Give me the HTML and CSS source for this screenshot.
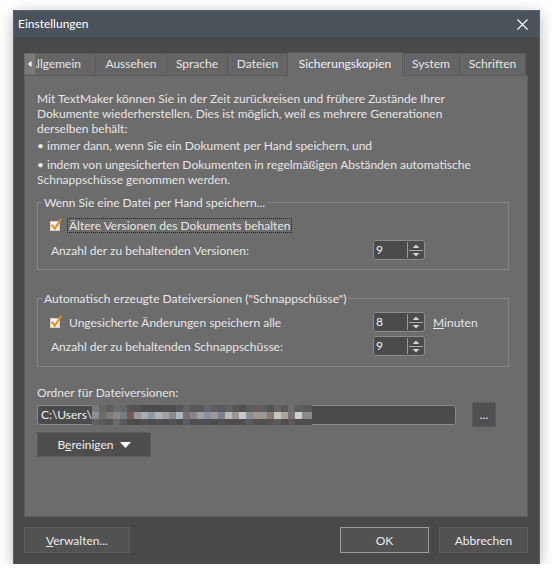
FILE: index.html
```html
<!DOCTYPE html>
<html lang="de">
<head>
<meta charset="utf-8">
<title>Einstellungen</title>
<link rel="stylesheet" href="styles.css">
</head>
<body>
<div class="window">
  <div class="titlebar">
    <span class="title">Einstellungen</span>
    <svg class="close" width="11" height="11" viewBox="0 0 11 11"><path d="M0.5 0.5 L10.5 10.5 M10.5 0.5 L0.5 10.5" stroke="#ffffff" stroke-width="1.1" fill="none"/></svg>
  </div>
  <div class="client">
    <div class="tabs">
      <div class="tabstrip">
        <div class="tab w-allg">Allgemein</div>
        <div class="tab w-auss">Aussehen</div>
        <div class="tab w-spra">Sprache</div>
        <div class="tab w-date">Dateien</div>
        <div class="tab active w-sich">Sicherungskopien</div>
        <div class="tab w-syst">System</div>
        <div class="tab w-schr">Schriften</div>
        <div class="scroll-left"><svg width="4" height="6" viewBox="0 0 4 6"><path d="M3.5 0 L0 3 L3.5 6 Z" fill="#ffffff"/></svg></div>
      </div>
      <div class="panel">
        <div class="intro">
          <p>Mit TextMaker können Sie in der Zeit zurückreisen und frühere Zustände Ihrer<br>Dokumente wiederherstellen. Dies ist möglich, weil es mehrere Generationen<br>derselben behält:</p>
          <p class="b1">• immer dann, wenn Sie ein Dokument per Hand speichern, und</p>
          <p class="b2">• indem von ungesicherten Dokumenten in regelmäßigen Abständen automatische<br>Schnappschüsse genommen werden.</p>
        </div>

        <fieldset class="group g1">
          <legend>Wenn Sie eine Datei per Hand speichern...</legend>
          <div class="check-row">
            <svg class="checkbox" width="14" height="14" viewBox="0 0 14 14"><rect x="0.5" y="3.5" width="9" height="9" fill="#f6f6f6" stroke="#cfcfcf"/><path d="M2.3 7.6 L4.8 10.6 L10.8 1.6" stroke="#f28a00" stroke-width="2" fill="none" stroke-linecap="square"/></svg>
            <span class="check-label focus">Ältere Versionen des Dokuments behalten</span>
          </div>
          <div class="field-row r-g1">
            <span class="label">Anzahl der zu behaltenden Versionen:</span>
            <div class="spin">
              <span class="spin-value">9</span>
              <span class="spin-btns"><svg width="16" height="18" viewBox="0 0 16 18"><path d="M1 9.5 H15" stroke="#a8a8a8" stroke-width="1"/><path d="M4.5 7 L8 3.5 L11.5 7 Z" fill="#d0d0d0"/><path d="M4.5 12 L8 15.5 L11.5 12 Z" fill="#d0d0d0"/></svg></span>
            </div>
          </div>
        </fieldset>

        <fieldset class="group g2">
          <legend>Automatisch erzeugte Dateiversionen ("Schnappschüsse")</legend>
          <div class="field-row">
            <div class="check-inline">
              <svg class="checkbox" width="14" height="14" viewBox="0 0 14 14"><rect x="0.5" y="3.5" width="9" height="9" fill="#f6f6f6" stroke="#cfcfcf"/><path d="M2.3 7.6 L4.8 10.6 L10.8 1.6" stroke="#f28a00" stroke-width="2" fill="none" stroke-linecap="square"/></svg>
              <span class="check-label">Ungesicherte Änderungen speichern alle</span>
            </div>
            <div class="spin">
              <span class="spin-value">8</span>
              <span class="spin-btns"><svg width="16" height="18" viewBox="0 0 16 18"><path d="M1 9.5 H15" stroke="#a8a8a8" stroke-width="1"/><path d="M4.5 7 L8 3.5 L11.5 7 Z" fill="#d0d0d0"/><path d="M4.5 12 L8 15.5 L11.5 12 Z" fill="#d0d0d0"/></svg></span>
            </div>
            <span class="unit"><u>M</u>inuten</span>
          </div>
          <div class="field-row r-g2">
            <span class="label">Anzahl der zu behaltenden Schnappschüsse:</span>
            <div class="spin">
              <span class="spin-value">9</span>
              <span class="spin-btns"><svg width="16" height="18" viewBox="0 0 16 18"><path d="M1 9.5 H15" stroke="#a8a8a8" stroke-width="1"/><path d="M4.5 7 L8 3.5 L11.5 7 Z" fill="#d0d0d0"/><path d="M4.5 12 L8 15.5 L11.5 12 Z" fill="#d0d0d0"/></svg></span>
            </div>
          </div>
        </fieldset>

        <div class="folder-label">Ordner für Dateiversionen:</div>
        <div class="path-row">
          <div class="path-input"><span class="path-text">C:\Users\</span><span class="mosaic"></span></div>
          <button class="btn browse">...</button>
        </div>
        <button class="btn clean"><span>B<u>e</u>reinigen</span><svg width="11" height="6" viewBox="0 0 11 6"><path d="M0 0 H11 L5.5 6 Z" fill="#ffffff"/></svg></button>
      </div>
    </div>
    <div class="footer">
      <button class="btn fbtn manage"><u>V</u>erwalten...</button>
      <div class="spacer"></div>
      <button class="btn fbtn ok">OK</button>
      <button class="btn fbtn cancel">Abbrechen</button>
    </div>
  </div>
</div>
</body>
</html>
```

FILE: styles.css
```css
* { box-sizing: border-box; }
html, body { margin: 0; padding: 0; background: #ffffff; }
body {
  font-family: Lato, "Noto Sans", sans-serif;
  font-size: 12px;
  color: #e6e6e6;
}
p { margin: 0; }

.window {
  margin: 11px 0 0 14px;
  width: 525px;
  height: 553px;
  background: #494949;
  box-shadow: 0 0 0 1px #5b6168, 0 3px 14px rgba(0, 0, 0, 0.32);
  display: flex;
  flex-direction: column;
}

.titlebar {
  height: 26px;
  flex: none;
  background: #4a525a;
  color: #ffffff;
  display: flex;
  align-items: center;
  justify-content: space-between;
  padding: 0 11px 0 4px;
  font-size: 12px;
}
.title { line-height: 26px; }

.client {
  flex: 1;
  display: flex;
  flex-direction: column;
  padding: 14px 11px 11px 10px;
}

.tabs { display: flex; flex-direction: column; }

.tabstrip {
  position: relative;
  height: 24px;
  display: flex;
  align-items: flex-end;
}
.tab {
  height: 22px;
  line-height: 20px;
  text-align: center;
  background: #656565;
  border: 1px solid #5a5a5a;
  border-bottom: none;
  border-left: none;
  color: #e6e6e6;
  white-space: nowrap;
}
.tab.active {
  height: 24px;
  line-height: 21px;
  background: #6c6c6c;
  border-left: 1px solid #5a5a5a;
  margin-left: -1px;
  margin-bottom: -1px;
  position: relative;
  z-index: 1;
  color: #f0f0f0;
}
.w-allg { width: 72px; border-left: 1px solid #5a5a5a; text-align: left; padding-left: 4px; }
.w-auss { width: 71px; }
.w-spra { width: 61px; }
.w-date { width: 60px; }
.w-sich { width: 116px; }
.w-syst { width: 57px; }
.w-schr { width: 66px; }

.scroll-left {
  position: absolute;
  left: 0;
  bottom: 0;
  width: 12px;
  height: 22px;
  background: #7a7a7a;
  border: 1px solid #6a6a6a;
  display: flex;
  align-items: center;
  justify-content: center;
  z-index: 2;
}

.panel {
  height: 442px;
  background: #6c6c6c;
  border: 1px solid #5c5c5c;
  padding: 15px 17px 0 12px;
  display: flex;
  flex-direction: column;
  align-items: flex-start;
}

.intro { line-height: 15px; color: #e6e6e6; }
.intro .b1 { margin-top: 2px; }
.intro .b2 { margin-top: 4px; }

.group {
  width: 472px;
  margin: 0;
  border: 1px solid #868686;
  padding: 0 0 0 13px;
  min-width: 0;
}
.group legend {
  padding: 0 2px;
  margin-left: -9px;
  line-height: 15px;
  color: #e8e8e8;
}
.g1 { margin-top: 8px; padding-top: 7px; padding-bottom: 9px; }
.g2 { margin-top: 21px; padding-top: 6px; padding-bottom: 10px; }

.check-row {
  display: flex;
  align-items: center;
  height: 16px;
}
.checkbox { flex: none; margin-right: 3px; margin-left: -1px; }
.check-label {
  border: 1px dotted transparent;
  padding: 0 1px;
  line-height: 13px;
  white-space: nowrap;
}
.check-label.focus { border-color: #1e1e1e; }
.check-inline { display: flex; align-items: center; }

.field-row {
  display: grid;
  grid-template-columns: 314px 52px auto;
  column-gap: 8px;
  align-items: center;
  height: 20px;
}
.r-g1 { margin-top: 7px; }
.r-g2 { margin-top: 4px; }
.label { white-space: nowrap; }
.unit { white-space: nowrap; }

.spin {
  width: 52px;
  height: 20px;
  background: #4b4b4b;
  border: 1px solid #8c8c8c;
  border-radius: 3px;
  display: flex;
  align-items: stretch;
}
.spin-value {
  width: 34px;
  padding-left: 2px;
  line-height: 18px;
  color: #f2f2f2;
}
.spin-btns {
  flex: 1;
  border-left: 1px solid #9a9a9a;
  margin: 1px 0;
  display: flex;
  align-items: center;
  justify-content: center;
}
.spin-btns svg { margin-top: -1px; }

.folder-label {
  margin-top: 18px;
  line-height: 15px;
  color: #e4e4e4;
}

.path-row {
  margin-top: 2px;
  display: flex;
  align-items: center;
  gap: 16px;
  height: 25px;
}
.path-input {
  width: 419px;
  height: 20px;
  background: #4b4b4b;
  border: 1px solid #8a8a8a;
  border-radius: 3px;
  display: flex;
  align-items: center;
  padding-left: 3px;
}
.path-text { line-height: 18px; color: #f0f0f0; }
.mosaic {
  width: 220px;
  height: 20px;
  margin: -1px 0;
  background:
    linear-gradient(90deg, #737a80 0 7px, #6a6664 7px 14px, #5f5b58 14px 21px, #6c6a6a 21px 28px, #616a6e 28px 35px, #585354 35px 42px, #525252 42px 49px, #4c4c4c 49px 56px, #4a4a4a 56px 63px, #4b4b4b 63px 70px, #4d4d4d 70px 77px, #4c4c4c 77px 84px, #565656 84px 91px, #5c6468 91px 98px, #5e5656 98px 105px, #585858 105px 112px, #5b6874 112px 119px, #615a5a 119px 126px, #5a5a5a 126px 133px, #5e6064 133px 140px, #5a5656 140px 147px, #4f4f4f 147px 154px, #5a5a5a 154px 161px, #6a5a54 161px 168px, #5e5e5e 168px 175px, #545454 175px 182px, #646464 182px 189px, #5a5858 189px 196px, #6e6e6e 196px 203px, #58605c 203px 210px, #5a5a5a 210px 220px) 0 0 / 100% 7px no-repeat,
    linear-gradient(90deg, #8a8f95 0 7px, #6f6a66 7px 14px, #7a7a7a 14px 21px, #8c8686 21px 28px, #6e7e88 28px 35px, #785a50 35px 42px, #9a9a9a 42px 49px, #a6acb0 49px 56px, #8a9aa6 56px 63px, #b2b2b2 63px 70px, #9ea4a8 70px 77px, #8a8a8a 77px 84px, #a8b8c0 84px 91px, #7a7070 91px 98px, #8c8484 98px 105px, #a0a0a0 105px 112px, #8890a0 112px 119px, #9a9a9a 119px 126px, #7a8090 126px 133px, #b8b8b8 133px 140px, #9a9696 140px 147px, #c8c8c8 147px 154px, #8890a0 154px 161px, #a09890 161px 168px, #989898 168px 175px, #8a7a70 175px 182px, #c6c8c0 182px 189px, #a8a4a0 189px 196px, #7a7078 196px 203px, #d0d0c8 203px 210px, #8a8a8a 210px 220px) 0 7px / 100% 7px no-repeat,
    linear-gradient(90deg, #606060 0 7px, #5a5a5a 7px 14px, #545454 14px 21px, #686a6c 21px 28px, #5a5a5a 28px 35px, #4e4e4e 35px 42px, #4a4a4a 42px 49px, #525252 49px 56px, #4c4c4c 56px 63px, #505050 63px 70px, #4e4e4e 70px 77px, #555555 77px 84px, #4c4c4c 84px 91px, #566068 91px 98px, #4e4e4e 98px 105px, #505050 105px 112px, #4e4e4e 112px 119px, #4c4c4c 119px 126px, #525252 126px 133px, #4e4e4e 133px 140px, #4c4c4c 140px 147px, #4e4e4e 147px 154px, #5c5c5c 154px 161px, #505050 161px 168px, #4e4e4e 168px 175px, #545454 175px 182px, #5a5a5a 182px 189px, #4e4e4e 189px 196px, #5a5a5a 196px 203px, #4c4c4c 203px 210px, #4e4e4e 210px 220px) 0 14px / 100% 6px no-repeat;
}

.btn {
  font-family: inherit;
  font-size: 12px;
  color: #ececec;
  background: #505050;
  border: 1px solid #5c5c5c;
  margin: 0;
  padding: 0;
  cursor: default;
}
.browse { width: 24px; height: 25px; line-height: 20px; }
.clean {
  margin-top: 5px;
  width: 114px;
  height: 25px;
  display: flex;
  align-items: center;
  justify-content: center;
  gap: 6px;
  background: #4e4e4e;
}

.footer {
  margin-top: 10px;
  display: flex;
  height: 26px;
}
.spacer { flex: 1; }
.fbtn { height: 26px; background: #525252; border-color: #5e5e5e; }
.manage { width: 106px; }
.ok { width: 89px; border-color: #9a9a9a; }
.cancel { width: 89px; margin-left: 10px; }
```
